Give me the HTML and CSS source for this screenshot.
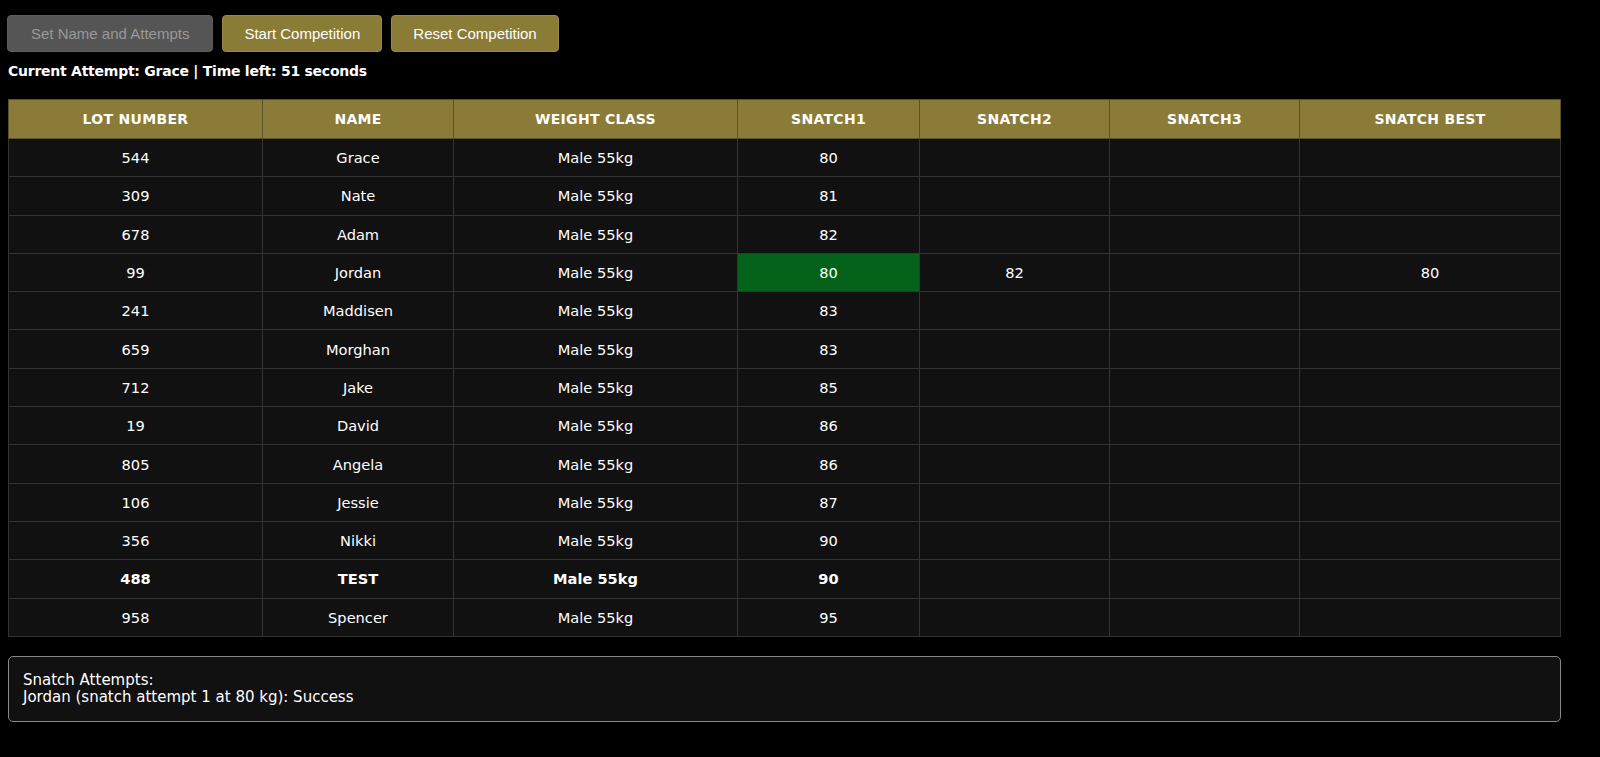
FILE: index.html
```html
<!DOCTYPE html>
<html lang="en">
  <head>
    <meta charset="UTF-8" />
    <meta name="viewport" content="width=device-width, initial-scale=1.0" />
    <title>Snatch Competition</title>
    <link rel="stylesheet" href="styles.css">
  </head>
  <body>
    <div class="controls">
      <button class="btn wide" disabled>Set Name and Attempts</button>
      <button class="btn">Start Competition</button>
      <button class="btn">Reset Competition</button>
    </div>
    <p class="status">Current Attempt: Grace | Time left: 51 seconds</p>
    <table class="board">
      <colgroup>
        <col style="width: 254px" />
        <col style="width: 191px" />
        <col style="width: 284px" />
        <col style="width: 182px" />
        <col style="width: 190px" />
        <col style="width: 190px" />
        <col />
      </colgroup>
      <thead>
        <tr>
          <th>Lot Number</th>
          <th>Name</th>
          <th>Weight Class</th>
          <th>Snatch1</th>
          <th>Snatch2</th>
          <th>Snatch3</th>
          <th>Snatch Best</th>
        </tr>
      </thead>
      <tbody>
        <tr><td>544</td><td>Grace</td><td>Male 55kg</td><td>80</td><td></td><td></td><td></td></tr>
        <tr><td>309</td><td>Nate</td><td>Male 55kg</td><td>81</td><td></td><td></td><td></td></tr>
        <tr><td>678</td><td>Adam</td><td>Male 55kg</td><td>82</td><td></td><td></td><td></td></tr>
        <tr><td>99</td><td>Jordan</td><td>Male 55kg</td><td class="good">80</td><td>82</td><td></td><td>80</td></tr>
        <tr><td>241</td><td>Maddisen</td><td>Male 55kg</td><td>83</td><td></td><td></td><td></td></tr>
        <tr><td>659</td><td>Morghan</td><td>Male 55kg</td><td>83</td><td></td><td></td><td></td></tr>
        <tr><td>712</td><td>Jake</td><td>Male 55kg</td><td>85</td><td></td><td></td><td></td></tr>
        <tr><td>19</td><td>David</td><td>Male 55kg</td><td>86</td><td></td><td></td><td></td></tr>
        <tr><td>805</td><td>Angela</td><td>Male 55kg</td><td>86</td><td></td><td></td><td></td></tr>
        <tr><td>106</td><td>Jessie</td><td>Male 55kg</td><td>87</td><td></td><td></td><td></td></tr>
        <tr><td>356</td><td>Nikki</td><td>Male 55kg</td><td>90</td><td></td><td></td><td></td></tr>
        <tr class="me"><td>488</td><td>TEST</td><td>Male 55kg</td><td>90</td><td></td><td></td><td></td></tr>
        <tr><td>958</td><td>Spencer</td><td>Male 55kg</td><td>95</td><td></td><td></td><td></td></tr>
      </tbody>
    </table>
    <div class="log">
      <div>Snatch Attempts:</div>
      <div>Jordan (snatch attempt 1 at 80 kg): Success</div>
    </div>
  </body>
</html>
```

FILE: styles.css
```css
body {
  background-color: #000;
  color: white;
  font-family: "DejaVu Sans", "Open Sans", sans-serif;
  margin: 0;
  padding: 15px 8px 8px 7px;
}
.controls {
  display: flex;
  gap: 9px;
}
.btn {
  font-family: "Liberation Sans", Arial, sans-serif;
  font-size: 15px;
  color: white;
  background-color: #8a7b37;
  border: 1px solid #9a8a45;
  border-radius: 4px;
  height: 37px;
  padding: 0 21px;
}
.btn.wide {
  padding: 0 23px;
}
.btn:disabled {
  background-color: #555;
  border-color: #5c5c5c;
  color: #999;
}
.status {
  margin: 10px 0 0 1px;
  font-size: 14px;
  letter-spacing: -0.25px;
  font-weight: bold;
  line-height: 18px;
}
.board {
  margin: 19px 0 0 1px;
  width: 1553px;
  border-collapse: collapse;
  table-layout: fixed;
  background-color: #111;
  font-size: 14.6px;
}
.board th,
.board td {
  border: 1px solid #333;
  text-align: center;
  height: 37.3px;
  padding: 0 8px;
}
.board th {
  height: 38px;
  background-color: #8a7b38;
  text-transform: uppercase;
  font-size: 14px;
  letter-spacing: 0.3px;
  font-weight: bold;
  border-color: #5a5228;
}
.board td.good {
  background-color: #04621a;
}
.board tr.me td {
  font-weight: bold;
}
.log {
  margin: 19px 0 0 1px;
  width: 1553px;
  box-sizing: border-box;
  background-color: #111;
  border: 1px solid #888;
  border-radius: 5px;
  padding: 15px 14px;
  font-size: 15px;
  line-height: 17px;
}
```
